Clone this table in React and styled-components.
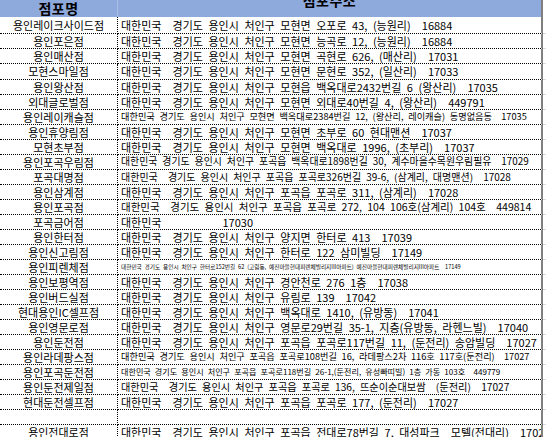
import React from "react";
import styled, { createGlobalStyle } from "styled-components";

const GlobalStyle = createGlobalStyle`
  html, body {
    margin: 0;
    padding: 0;
    background: #fff;
  }
  body {
    font-family: "Noto Sans CJK KR", "Noto Sans", sans-serif;
    color: #000;
  }
`;

const Sheet = styled.div`
  width: 546px;
  height: 437px;
  overflow: hidden;
  background: #fff;
`;

const HeaderRow = styled.div`
  display: grid;
  grid-template-columns: 118px 425px 1fr;
  height: 17px;
`;

const HeadCell = styled.div`
  display: flex;
  align-items: center;
  justify-content: center;
  background: ${(p) => (p.$blank ? "#fff" : "#8ea9db")};
  border-right: ${(p) => p.$edge || "none"};
  overflow: hidden;
  font-size: 14px;
  font-weight: 700;
  line-height: 17px;
`;

const HeadLabel = styled.span`
  margin-top: ${(p) => p.$lift || 0}px;
  letter-spacing: 0.5px;
`;

const Row = styled.div`
  display: grid;
  grid-template-columns: 118px 425px 1fr;
  height: ${(p) => p.$h}px;
`;

const NameCell = styled.div`
  display: flex;
  align-items: center;
  justify-content: center;
  border-right: 1px dotted #000;
  border-bottom: 1px dotted #000;
  font-size: 11px;
  line-height: 1;
  white-space: nowrap;
  overflow: hidden;
`;

const AddrCell = styled.div`
  display: flex;
  align-items: center;
  padding-left: 3px;
  border-right: 2px solid #7f7f7f;
  border-bottom: 1px dotted #000;
  font-size: ${(p) => p.$size}px;
  line-height: 1;
  white-space: pre;
  word-spacing: ${(p) => p.$size * 0.28}px;
  overflow: hidden;
`;

const Filler = styled.div`
  border-bottom: 1px solid #dadada;
`;

const rows = [
  ["용인레이크사이드점", "대한민국  경기도 용인시 처인구 모현면 오포로 43, (능원리)  16884", 11, 17],
  ["용인포은점", "대한민국  경기도 용인시 처인구 모현면 능곡로 12, (능원리)  16884", 11, 15],
  ["용인매산점", "대한민국  경기도 용인시 처인구 모현면 곡현로 626, (매산리)  17031", 11, 15],
  ["모현스마일점", "대한민국  경기도 용인시 처인구 모현면 문현로 352, (일산리)  17033", 11, 16],
  ["용인왕산점", "대한민국  경기도 용인시 처인구 모현읍 백옥대로2432번길 6 (왕산리)  17035", 11, 15],
  ["외대글로벌점", "대한민국  경기도 용인시 처인구 모현면 외대로40번길 4, (왕산리)  449791", 11, 15],
  ["용인레이캐슬점", "대한민국 경기도 용인시 처인구 모현면 백옥대로2384번길 12, (왕산리, 레이캐슬) 동명없음동  17035", 9.2, 15],
  ["용인휴양림점", "대한민국  경기도 용인시 처인구 모현면 초부로 60 현대맨션  17037", 11, 15],
  ["모현초부점", "대한민국  경기도 용인시 처인구 모현면 백옥대로 1996, (초부리)  17037", 11, 15],
  ["용인포곡우림점", "대한민국 경기도 용인시 처인구 포곡읍 백옥대로1898번길 30, 계수마을수목원우림필유  17029", 9.9, 15],
  ["포곡대명점", "대한민국  경기도 용인시 처인구 포곡읍 포곡로326번길 39-6, (삼계리, 대명맨션)  17028", 10, 15],
  ["용인삼계점", "대한민국  경기도 용인시 처인구 포곡읍 포곡로 311, (삼계리)  17028", 11, 15],
  ["용인포곡점", "대한민국  경기도 용인시 처인구 포곡읍 포곡로 272, 104 106호(삼계리) 104호  449814", 10.5, 15],
  ["포곡금어점", "대한민국           17030", 11, 15],
  ["용인한터점", "대한민국  경기도 용인시 처인구 양지면 한터로 413  17039", 11, 15],
  ["용인신고림점", "대한민국  경기도 용인시 처인구 한터로 122 삼미빌딩  17149", 11, 15],
  ["용인피렌체점", "대한민국 경기도 용인시 처인구 한터로152번길 62 (고림동, 예진마을현대피렌체빌리지III아파트) 예진마을현대피렌체빌리지III아파트  17149", 5.65, 15],
  ["용인보평역점", "대한민국  경기도 용인시 처인구 경안천로 276 1층  17038", 11, 15],
  ["용인버드실점", "대한민국  경기도 용인시 처인구 유림로 139  17042", 11, 15],
  ["현대용인IC셀프점", "대한민국  경기도 용인시 처인구 백옥대로 1410, (유방동)  17041", 11, 15],
  ["용인영문로점", "대한민국  경기도 용인시 처인구 영문로29번길 35-1, 지층(유방동, 라헨느빌)  17040", 11, 15],
  ["용인둔전점", "대한민국  경기도 용인시 처인구 포곡읍 포곡로117번길 11, (둔전리) 송암빌딩  17027", 11, 15],
  ["용인라데팡스점", "대한민국 경기도 용인시 처인구 포곡읍 포곡로108번길 16, 라데팡스2차 116호 117호(둔전리)  17027", 9.2, 15],
  ["용인포곡둔전점", "대한민국 경기도 용인시 처인구 포곡읍 포곡로118번길 26-1,(둔전리, 유성빠띠빌) 1층 가동 103호  449779", 8.1, 15],
  ["용인둔전제일점", "대한민국  경기도 용인시 처인구 포곡읍 포곡로 136, 뜨순이순대보쌈  (둔전리)  17027", 10.2, 15],
  ["현대둔전셀프점", "대한민국  경기도 용인시 처인구 포곡읍 포곡로 177, (둔전리)  17027", 11, 15],
  ["", "", 11, 15],
  ["용인전대로점", "대한민국  경기도 용인시 처인구 포곡읍 전대로78번길 7, 대성파크  모텔(전대리)  17023", 11, 15],
];

export default function App() {
  return (
    <Sheet>
      <GlobalStyle />
      <HeaderRow>
        <HeadCell $edge="1px solid #a9bfe6">
          <HeadLabel>점포명</HeadLabel>
        </HeadCell>
        <HeadCell $edge="2px solid #7f7f7f">
          <HeadLabel $lift={-17}>점포주소</HeadLabel>
        </HeadCell>
        <HeadCell $blank />
      </HeaderRow>
      {rows.map(([name, addr, size, h], i) => (
        <Row key={i} $h={h}>
          <NameCell>{name}</NameCell>
          <AddrCell $size={size}>{addr}</AddrCell>
          <Filler />
        </Row>
      ))}
    </Sheet>
  );
}
